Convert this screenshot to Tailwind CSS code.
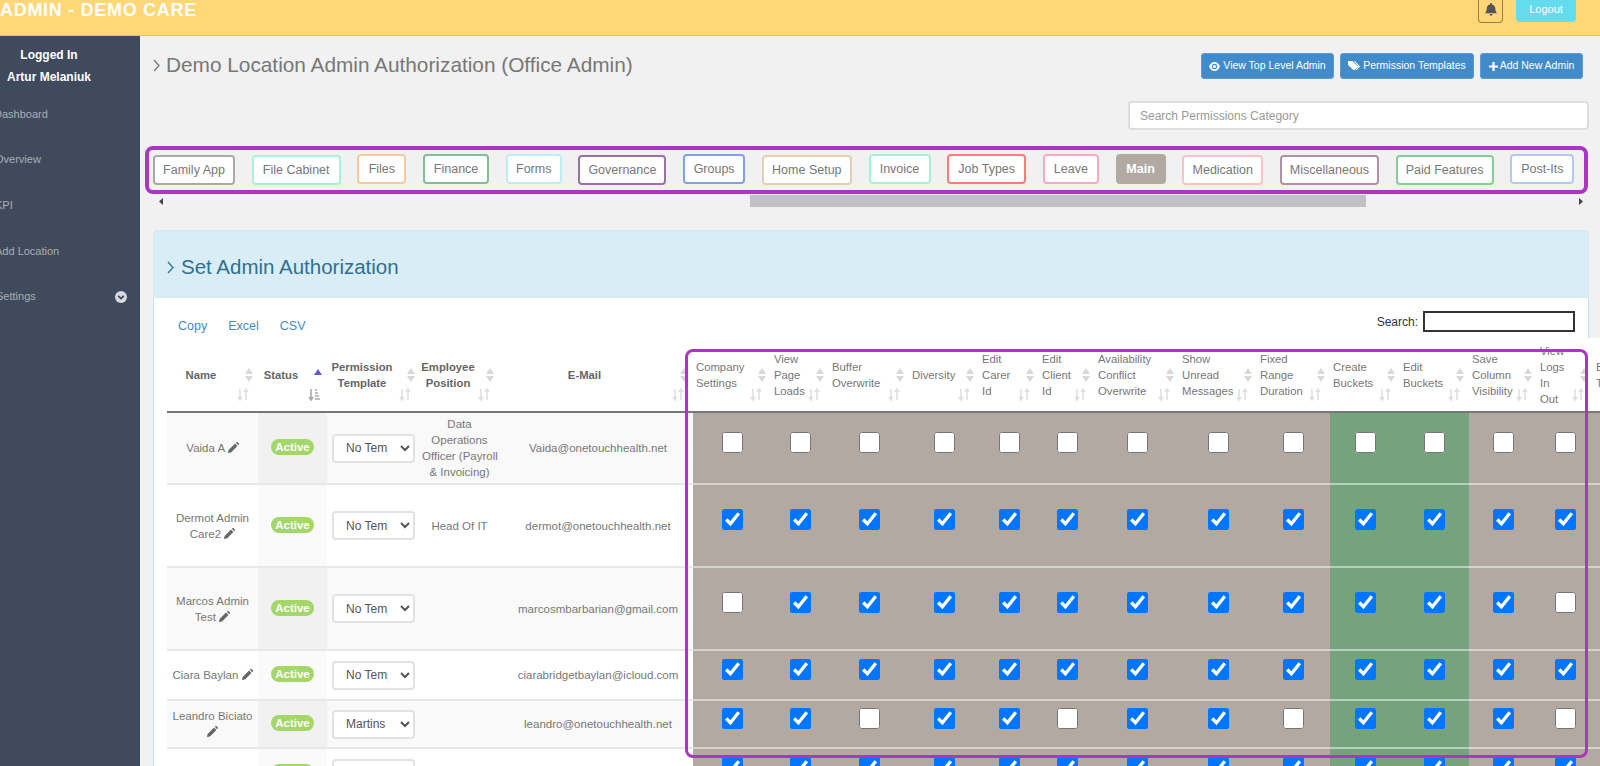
<!DOCTYPE html>
<html lang="en">
<head>
    <meta charset="UTF-8">
    <meta name="viewport" content="width=device-width, initial-scale=1.0">
    <title>Demo Care - Admin Authorization</title>
    <script src="https://cdn.jsdelivr.net/npm/@tailwindcss/browser@4"></script>
</head>
<body class="bg-[#f1f1f1] font-['Liberation_Sans',Arial,sans-serif] h-screen overflow-hidden relative">
    <header class="h-[36px] bg-[#ffd777] border-b border-[#e6c26a] flex justify-between items-start overflow-hidden">
        <span class="text-[18px] font-bold text-white leading-[20px] tracking-[0.7px] whitespace-nowrap">ADMIN - DEMO CARE</span>
        <div class="flex gap-[13px] pr-[24px]">
            <div class="w-[25px] h-[23px] border border-t-0 border-[#8f8050] rounded-b-[4px] flex justify-center pt-[2px]">
                <svg width="14" height="15" viewBox="0 0 14 14" fill="#555"><path d="M7 0.5a1 1 0 0 1 1 1v.6c2.4.5 3.4 2.4 3.4 4.4 0 2.2.8 3.2 1.6 4.2H1c.8-1 1.6-2 1.6-4.2 0-2 1-3.9 3.4-4.4v-.6a1 1 0 0 1 1-1zM5.4 11.6h3.2a1.6 1.6 0 0 1-3.2 0z"/></svg>
            </div>
            <div class="w-[60px] h-[22px] bg-[#62dcee] rounded-b-[4px] text-white text-[11px] text-center leading-[19px]">Logout</div>
        </div>
    </header>

    <div class="flex h-[730px]">
        <aside class="w-[140px] shrink-0 bg-[#3f4a5c] overflow-hidden">
            <div class="w-[98px] pt-[8px] text-center text-white font-bold text-[12px] leading-[22px]">
                <div>Logged In</div>
                <div>Artur Melaniuk</div>
            </div>
            <nav class="mt-[3px] text-[11px] text-[#a9aeb6]">
                <div class="h-[45.7px] flex items-center -ml-[6px]">Dashboard</div>
                <div class="h-[45.7px] flex items-center -ml-[5px]">Overview</div>
                <div class="h-[45.7px] flex items-center -ml-[5px]">KPI</div>
                <div class="h-[45.7px] flex items-center -ml-[5px]">Add Location</div>
                <div class="h-[45.7px] flex items-center justify-between -ml-[4px] pr-[13px]">
                    <span>Settings</span>
                    <svg width="12" height="12" viewBox="0 0 12 12"><circle cx="6" cy="6" r="6" fill="#d6dade"/><path d="M3.2 4.8 6 7.6l2.800-2.800" fill="none" stroke="#3f4a5c" stroke-width="1.8"/></svg>
                </div>
            </nav>
        </aside>

        <main class="flex-1 min-w-0 overflow-hidden">
            <div class="flex justify-between pl-[13px] pr-[17px] pt-[17px]">
                <h1 class="flex items-center gap-[6px] h-[24px] text-[20.8px] text-[#777] whitespace-nowrap">
                    <svg width="7" height="13" viewBox="0 0 7 13" fill="none" stroke="#777" stroke-width="1.3"><path d="M1 1l5 5.500L1 12"/></svg>
                    Demo Location Admin Authorization (Office Admin)
                </h1>
                <div class="flex gap-[6px] text-white text-[10.5px] h-[26px]">
                    <button class="w-[133px] h-[26px] bg-[#428bca] border border-[#5a9bd3] rounded-[3px] flex items-center justify-center gap-[3px]">
                        <svg width="11" height="9" viewBox="0 0 11 9" fill="white"><path d="M5.500 0C8 0 10 2 11 4.500 10 7 8 9 5.500 9S1 7 0 4.500C1 2 3 0 5.500 0zm0 1.800a2.700 2.700 0 1 0 0 5.400 2.700 2.700 0 0 0 0-5.400z"/><circle cx="5.500" cy="4.500" r="1.600"/></svg>
                        View Top Level Admin
                    </button>
                    <button class="w-[134px] h-[26px] bg-[#428bca] border border-[#5a9bd3] rounded-[3px] flex items-center justify-center gap-[3px]">
                        <svg width="12" height="10" viewBox="0 0 12 10" fill="white"><path d="M0 0h4.500L10 5.500 6 9.500 0 4z"/><path d="M6 0h1l5 5.500-3.600 3.800-.8-.7 2.800-3.100z"/></svg>
                        Permission Templates
                    </button>
                    <button class="w-[103px] h-[26px] bg-[#428bca] border border-[#5a9bd3] rounded-[3px] flex items-center justify-center gap-[2px]">
                        <svg width="9" height="9" viewBox="0 0 9 9" fill="white"><path d="M3.400 0h2.200v3.400H9v2.200H5.600V9H3.400V5.600H0V3.400h3.400z"/></svg>
                        Add New Admin
                    </button>
                </div>
            </div>

            <div class="flex justify-end pr-[11px] mt-[22px]">
                <input type="text" placeholder="Search Permissions Category" class="w-[461px] h-[29px] bg-white border-2 border-[#dedede] rounded-[4px] px-[10px] text-[12px] text-[#777] placeholder:text-[#999]">
            </div>

            <div class="h-[48px] ml-[5px] mr-[12px] mt-[16px] border-[4px] border-[#ab35c4] rounded-[8px] flex items-center gap-[16.7px] px-[4px] text-[12.5px] text-[#777] text-center overflow-hidden whitespace-nowrap">
                <span class="w-[82px] shrink-0 h-[30px] leading-[26px] bg-white border-2 rounded-[4px] border-[#a9a9a9]">Family App</span>
                <span class="w-[89px] shrink-0 h-[30px] leading-[26px] bg-white border-2 rounded-[4px] border-[#a8f2da]">File Cabinet</span>
                <span class="w-[49px] shrink-0 h-[30px] leading-[26px] mb-[2px] bg-white border-2 rounded-[4px] border-[#f9c89e]">Files</span>
                <span class="w-[66px] shrink-0 h-[30px] leading-[26px] mb-[2px] bg-white border-2 rounded-[4px] border-[#7fbf98]">Finance</span>
                <span class="w-[56px] shrink-0 h-[30px] leading-[26px] mb-[2px] bg-white border-2 rounded-[4px] border-[#bdeef8]">Forms</span>
                <span class="w-[88px] shrink-0 h-[30px] leading-[26px] bg-white border-2 rounded-[4px] border-[#9b6fa8]">Governance</span>
                <span class="w-[62px] shrink-0 h-[30px] leading-[26px] mb-[2px] bg-white border-2 rounded-[4px] border-[#7f9ff0]">Groups</span>
                <span class="w-[90px] shrink-0 h-[30px] leading-[26px] bg-white border-2 rounded-[4px] border-[#e2d0b2]">Home Setup</span>
                <span class="w-[62px] shrink-0 h-[30px] leading-[26px] mb-[2px] bg-white border-2 rounded-[4px] border-[#a0f2da]">Invoice</span>
                <span class="w-[79px] shrink-0 h-[30px] leading-[26px] mb-[2px] bg-white border-2 rounded-[4px] border-[#f87c7c]">Job Types</span>
                <span class="w-[56px] shrink-0 h-[30px] leading-[26px] mb-[2px] bg-white border-2 rounded-[4px] border-[#f8a8c8]">Leave</span>
                <span class="w-[50px] shrink-0 h-[30px] leading-[26px] mb-[2px] bg-[#b1a9a2] border-2 rounded-[4px] border-[#b1a9a2] text-white font-bold">Main</span>
                <span class="w-[81px] shrink-0 h-[30px] leading-[26px] bg-white border-2 rounded-[4px] border-[#f8c4c4]">Medication</span>
                <span class="w-[99px] shrink-0 h-[30px] leading-[26px] bg-white border-2 rounded-[4px] border-[#b08fa8]">Miscellaneous</span>
                <span class="w-[98px] shrink-0 h-[30px] leading-[26px] bg-white border-2 rounded-[4px] border-[#88cc99]">Paid Features</span>
                <span class="w-[64px] shrink-0 h-[30px] leading-[26px] mb-[2px] bg-white border-2 rounded-[4px] border-[#b4c8f8]">Post-Its</span>
            </div>

            <div class="h-[12px] mt-[1px] ml-[12px] mr-[11px] flex items-center">
                <svg class="w-[16px] shrink-0" width="16" height="7" viewBox="0 0 16 7" fill="#444"><path d="M11 0v7L7 3.500z"/></svg>
                <div class="w-[582px] shrink-0"></div>
                <div class="w-[616px] h-[12px] shrink-0 bg-[#c1c1c1]"></div>
                <div class="flex-1"></div>
                <svg width="16" height="7" viewBox="0 0 16 7" fill="#444"><path d="M6 0v7l4-3.500z"/></svg>
            </div>

            <section class="mt-[23px] ml-[13px] mr-[11px]">
                <div class="h-[68px] bg-[#d9edf7] border border-[#cfeaf5] rounded-t-[4px] flex items-center gap-[7px] pl-[13px] pt-[7px] text-[20.5px] text-[#31708f]">
                    <svg width="7" height="13" viewBox="0 0 7 13" fill="none" stroke="#31708f" stroke-width="1.3"><path d="M1 1l5 5.500L1 12"/></svg>
                    Set Admin Authorization
                </div>
                <div class="bg-white border-x border-[#bce8f1] pl-[13px] h-[600px]">
                    <div class="flex justify-between pt-[13px] h-[34px] text-[12.5px]">
                        <div class="flex gap-[21px] pl-[11px] pt-[6px] text-[#428bca]">
                            <span>Copy</span>
                            <span>Excel</span>
                            <span>CSV</span>
                        </div>
                        <label class="flex gap-[5px] pr-[13px] text-[#333] items-center h-[21px] text-[12px]">
                            Search:
                            <input type="text" class="w-[152px] h-[21px] border-2 border-[#333] bg-white">
                        </label>
                    </div>
                    <div class="w-[1506px] mt-[6px]">
                        <table class="table-fixed w-[1506px] text-[11.5px] text-[#777]">
                            <colgroup>
                                <col class="w-[91px]"><col class="w-[69px]"><col class="w-[93px]"><col class="w-[79px]"><col class="w-[194px]">
                                <col class="w-[78px]"><col class="w-[58px]"><col class="w-[80px]"><col class="w-[70px]"><col class="w-[60px]"><col class="w-[56px]"><col class="w-[84px]"><col class="w-[78px]"><col class="w-[73px]"><col class="w-[70px]"><col class="w-[69px]"><col class="w-[68px]"><col class="w-[56px]"><col class="w-[80px]">
                            </colgroup>
                            <thead id="head"></thead>
                            <tbody id="rows"></tbody>
                        </table>
                    </div>
                </div>
            </section>
        </main>
    </div>

    <!-- highlight drawn over the permission columns -->
    <div class="absolute left-[685px] top-[349px] w-[903px] h-[409px] border-[3px] border-[#ab35c4] rounded-[8px] pointer-events-none"></div>

    <script>
        const sortBoth = '<svg class="absolute right-[5px] top-[30px]" width="8" height="14" viewBox="0 0 8 14" fill="#d8d8d8"><path d="M4 0l4 6H0zM4 14l4-6H0z"/></svg>';
        const sortUp = '<svg class="absolute right-[5px] top-[31px]" width="8" height="6" viewBox="0 0 8 6" fill="#5b5bd6"><path d="M4 0l4 6H0z"/></svg>';
        const arrows = '<svg class="absolute right-[9px] top-[50px]" width="12" height="13" viewBox="0 0 12 13" fill="none" stroke="#e0e0e0" stroke-width="1.6"><path d="M3 1v10M1 9l2 3 2-3M9 12V2M7 4l2-3 2 3"/></svg>';
        const arrowsSorted = '<svg class="absolute right-[7px] top-[50px]" width="12" height="13" viewBox="0 0 12 13" fill="none" stroke="#aaa" stroke-width="1.6"><path d="M3 1v10M1 9l2 3 2-3M7 2h2M7 5h3M7 8h4M7 11h5"/></svg>';
        const pencil = '<svg class="inline-block align-[-1px]" width="11" height="11" viewBox="0 0 11 11" fill="#666"><path d="M0 11l.6-3L7 1.600 9.400 4 3 10.400zM7.800.8l.5-.5a1 1 0 0 1 1.400 0l1 1a1 1 0 0 1 0 1.400l-.5.5z"/></svg>';

        const boldHeads = ['Name', 'Status', 'Permission<br>Template', 'Employee<br>Position', 'E-Mail'];
        const checkHeads = ['Company<br>Settings', 'View<br>Page<br>Loads', 'Buffer<br>Overwrite', 'Diversity', 'Edit<br>Carer<br>Id', 'Edit<br>Client<br>Id', 'Availability<br>Conflict<br>Overwrite', 'Show<br>Unread<br>Messages', 'Fixed<br>Range<br>Duration', 'Create<br>Buckets', 'Edit<br>Buckets', 'Save<br>Column<br>Visibility', 'View<br>Logs<br>In<br>Out', 'Bulk<br>Tags'];

        const people = [
            { name: 'Vaida A', job: 'Data<br>Operations<br>Officer (Payroll<br>&amp; Invoicing)', mail: 'Vaida@onetouchhealth.net', tpl: 'No Template', h: 'h-[72px]', off: [0,1,2,3,4,5,6,7,8,9,10,11,12] },
            { name: 'Dermot Admin Care2', job: 'Head Of IT', mail: 'dermot@onetouchhealth.net', tpl: 'No Template', h: 'h-[83px]', off: [] },
            { name: 'Marcos Admin Test', job: '', mail: 'marcosmbarbarian@gmail.com', tpl: 'No Template', h: 'h-[83px]', off: [0, 12] },
            { name: 'Ciara Baylan', job: '', mail: 'ciarabridgetbaylan@icloud.com', tpl: 'No Template', h: 'h-[50px]', off: [] },
            { name: 'Leandro Biciato', job: '', mail: 'leandro@onetouchhealth.net', tpl: 'Martins', h: 'h-[48px]', off: [2, 5, 8, 12] },
            { name: '', job: '', mail: '', tpl: 'No Template', h: 'h-[50px]', off: [] }
        ];

        let head = '<tr class="h-[74px] border-b-2 border-[#777]">';
        boldHeads.forEach(function (label, i) {
            head += '<th class="relative bg-white font-bold text-center text-[#666] text-[11.3px] leading-[16px] pr-[23px]">' + label + (i === 1 ? sortUp + arrowsSorted : sortBoth + arrows) + '</th>';
        });
        checkHeads.forEach(function (label) {
            head += '<th class="relative bg-white font-normal text-left text-[11.3px] leading-[16px] pl-[3px]">' + label + sortBoth + arrows + '</th>';
        });
        document.getElementById('head').innerHTML = head + '</tr>';

        let rows = '';
        people.forEach(function (p, r) {
            const odd = r % 2 === 0;
            const plain = odd ? 'bg-[#f9f9f9] border-b-2 border-[#e8e8e8] text-center px-[2px] leading-[16px]' : 'bg-white border-b-2 border-[#e8e8e8] text-center px-[2px] leading-[16px]';
            const status = odd ? 'bg-[#f1f1f1] border-b-2 border-[#e8e8e8] text-center' : 'bg-[#fafafa] border-b-2 border-[#e8e8e8] text-center';
            rows += '<tr class="' + p.h + '">';
            rows += '<td class="' + plain + '">' + (p.name ? p.name + ' ' + pencil : '') + '</td>';
            rows += '<td class="' + status + '"><span class="inline-block w-[43px] h-[16px] rounded-full bg-[#a3d768] text-white font-bold leading-[16px]">Active</span></td>';
            rows += '<td class="' + plain + '"><select class="w-[83px] h-[29px] bg-white border-2 border-[#e2e2e2] rounded-[4px] pl-[8px] pr-[9px] text-[12px] text-[#555]"><option>' + p.tpl + '</option></select></td>';
            rows += '<td class="' + plain + ' whitespace-nowrap">' + p.job + '</td>';
            rows += '<td class="' + plain + ' pl-[6px]">' + p.mail + '</td>';
            for (let c = 0; c < 14; c++) {
                const green = c === 9 || c === 10;
                const cell = green ? 'bg-[#75a37d] border-b-2 border-[#b9cfbd]' : 'bg-[#b1a9a2] border-b-2 border-[#d6d2ce]';
                const box = c === 13 ? '' : '<input type="checkbox" class="block mx-auto mb-[12px] w-[21px] h-[21px]"' + (p.off.includes(c) ? '' : ' checked') + '>';
                rows += '<td class="' + cell + '">' + box + '</td>';
            }
            rows += '</tr>';
        });
        document.getElementById('rows').innerHTML = rows;
    </script>
</body>
</html>
